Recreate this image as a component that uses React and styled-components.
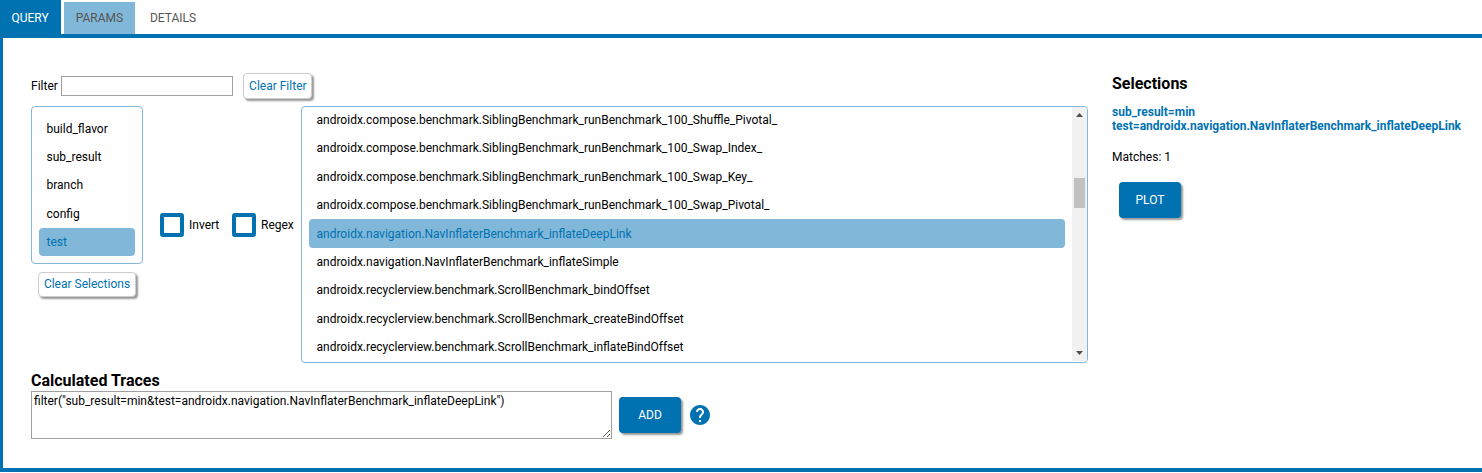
import React from 'react';
import styled, { createGlobalStyle } from 'styled-components';

const BLUE = '#0072b2';
const LIGHT_BLUE = '#81b8d9';

const GlobalStyle = createGlobalStyle`
  * { box-sizing: border-box; }
  body {
    margin: 0;
    background: #fff;
    color: #000;
    font: 12px/14px Roboto, sans-serif;
    overflow: hidden;
  }
  button, input, textarea { font: inherit; color: inherit; margin: 0; }
`;

const Tabs = styled.nav`
  display: flex;
  align-items: flex-end;
  height: 34px;
`;

const Tab = styled.button`
  height: ${(p) => (p.$selected ? 34 : 32)}px;
  width: ${(p) => p.$width}px;
  margin-right: 3px;
  padding: ${(p) => (p.$selected ? '2px 1px 0 0' : '0')};
  border: 0;
  background: ${(p) => p.$bg || 'transparent'};
  color: ${(p) => (p.$selected ? '#fff' : '#555')};
  text-align: center;
`;

const Panel = styled.main`
  display: flex;
  gap: 24px;
  height: 438px;
  padding: 35px 0 0 28px;
  border: solid ${BLUE};
  border-width: 4px 0 4px 3px;
`;

const Editor = styled.div`
  flex: none;
  width: 1057px;
`;

const FilterRow = styled.div`
  display: flex;
  align-items: center;
  height: 26px;
  margin-bottom: 7px;
`;

const FilterInput = styled.input`
  width: 172px;
  height: 20px;
  margin: 0 10px 0 3px;
  border: 1px solid #a0a0a0;
  background: #fff;
`;

const SmallButton = styled.button`
  height: ${(p) => p.$height}px;
  width: ${(p) => p.$width}px;
  padding: ${(p) => p.$padding};
  border: 1px solid #ccc;
  border-radius: 4px;
  background: #fff;
  color: ${BLUE};
  box-shadow: 2px 2px 2px #999;
  white-space: nowrap;
`;

const PickerRow = styled.div`
  display: flex;
  height: 257px;
`;

const KeyColumn = styled.div`
  width: 112px;
`;

const KeyList = styled.div`
  height: 158px;
  margin-bottom: 8px;
  padding: 7px;
  border: 1px solid ${LIGHT_BLUE};
  border-radius: 4px;
  background: #fefefe;
`;

const ClearSelections = styled.div`
  padding-left: 7px;
`;

const Item = styled.div`
  height: 28.42px;
  padding: 7.52px 7.5px 0;
  border-radius: 4px;
  background: ${(p) => (p.$selected ? LIGHT_BLUE : 'transparent')};
  color: ${(p) => (p.$selected ? BLUE : '#000')};
  white-space: nowrap;
`;

const Options = styled.div`
  display: flex;
  gap: 13px;
  height: 24px;
  width: 158px;
  margin-top: 107px;
  padding-left: 17px;
`;

const Option = styled.label`
  display: flex;
  flex: none;
  align-items: center;
  gap: 5px;
  width: 59px;
  white-space: nowrap;
`;

const Box = styled.span`
  width: 24px;
  height: 24px;
  flex: none;
  border: 4px solid ${BLUE};
  border-radius: 3px;
  background: #fff;
`;

const ValueList = styled.div`
  display: flex;
  width: 787px;
  border: 1px solid ${LIGHT_BLUE};
  border-radius: 4px;
  background: #fefefe;
  overflow: hidden;
`;

const Values = styled.div`
  flex: 1;
  height: 255px;
  padding: 0 7px;
  overflow: hidden;
`;

const ValuesInner = styled.div`
  margin-top: -1.52px;
`;

const ScrollBar = styled.div`
  display: flex;
  flex-direction: column;
  align-items: center;
  width: 15px;
  height: 254px;
  padding: 6px 0;
  background: #f1f1f1;
`;

const Thumb = styled.div`
  width: 11px;
  height: 30px;
  margin-top: 61px;
  margin-bottom: auto;
  background: #c1c1c1;
`;

const Arrow = styled.svg`
  display: block;
  width: 7px;
  height: 4px;
  fill: #505050;
`;

const Heading = styled.h3`
  margin: 0;
  font-size: 16px;
  line-height: 20px;
  font-weight: 700;
`;

const TracesHeading = styled(Heading)`
  margin-top: 8px;
`;

const TracesRow = styled.div`
  display: flex;
  align-items: center;
`;

const TracesText = styled.textarea`
  display: block;
  width: 581px;
  height: 48px;
  margin-right: 7px;
  padding: 2px;
  border: 1px solid #a0a0a0;
  border-radius: 0;
  background: #fff;
`;

const ActionButton = styled.button`
  width: 62px;
  height: 36px;
  padding: 0;
  border: 0;
  border-radius: 4px;
  background: ${BLUE};
  color: #fff;
  box-shadow: 2px 2px 2px #999;
`;

const HelpIcon = styled.svg`
  width: 24px;
  height: 24px;
  margin-left: 7px;
  fill: ${BLUE};
`;

const Summary = styled.aside`
  flex: 1;
  padding-top: 1px;
`;

const Chosen = styled.div`
  margin: 11px 0 17px;
  color: ${BLUE};
  font-weight: 700;
`;

const PlotRow = styled.div`
  padding: 18px 0 0 7px;
`;

const keys = ['build_flavor', 'sub_result', 'branch', 'config', 'test'];

const values = [
  'androidx.compose.benchmark.SiblingBenchmark_runBenchmark_100_Shuffle_Pivotal_',
  'androidx.compose.benchmark.SiblingBenchmark_runBenchmark_100_Swap_Index_',
  'androidx.compose.benchmark.SiblingBenchmark_runBenchmark_100_Swap_Key_',
  'androidx.compose.benchmark.SiblingBenchmark_runBenchmark_100_Swap_Pivotal_',
  'androidx.navigation.NavInflaterBenchmark_inflateDeepLink',
  'androidx.navigation.NavInflaterBenchmark_inflateSimple',
  'androidx.recyclerview.benchmark.ScrollBenchmark_bindOffset',
  'androidx.recyclerview.benchmark.ScrollBenchmark_createBindOffset',
  'androidx.recyclerview.benchmark.ScrollBenchmark_inflateBindOffset',
];

export default function App() {
  return (
    <>
      <GlobalStyle />
      <Tabs>
        <Tab $selected $bg={BLUE} $width={61}>QUERY</Tab>
        <Tab $bg={LIGHT_BLUE} $width={71}>PARAMS</Tab>
        <Tab $width={70}>DETAILS</Tab>
      </Tabs>
      <Panel>
        <Editor>
          <FilterRow>
            <span>Filter</span>
            <FilterInput aria-label="Filter" />
            <SmallButton $width={69} $height={26} $padding="0 0 0 1px">Clear Filter</SmallButton>
          </FilterRow>
          <PickerRow>
            <KeyColumn>
              <KeyList>
                {keys.map((k) => (
                  <Item key={k} $selected={k === 'test'}>{k}</Item>
                ))}
              </KeyList>
              <ClearSelections>
                <SmallButton $width={98} $height={25} $padding="0 0 1px">Clear Selections</SmallButton>
              </ClearSelections>
            </KeyColumn>
            <Options>
              <Option><Box />Invert</Option>
              <Option><Box />Regex</Option>
            </Options>
            <ValueList>
              <Values>
                <ValuesInner>
                  {values.map((v, i) => (
                    <Item key={v} $selected={i === 4}>{v}</Item>
                  ))}
                </ValuesInner>
              </Values>
              <ScrollBar>
                <Arrow viewBox="0 0 7 4"><path d="M3.5 0L7 4H0z" /></Arrow>
                <Thumb />
                <Arrow viewBox="0 0 7 4"><path d="M0 0H7L3.5 4z" /></Arrow>
              </ScrollBar>
            </ValueList>
          </PickerRow>
          <TracesHeading>Calculated Traces</TracesHeading>
          <TracesRow>
            <TracesText
              spellCheck={false}
              defaultValue={'filter("sub_result=min&test=androidx.navigation.NavInflaterBenchmark_inflateDeepLink")'}
            />
            <ActionButton>ADD</ActionButton>
            <HelpIcon viewBox="0 0 24 24">
              <path d="M12 2C6.48 2 2 6.48 2 12s4.48 10 10 10 10-4.48 10-10S17.52 2 12 2zm1 17h-2v-2h2v2zm2.07-7.75l-.9.92C13.45 12.9 13 13.5 13 15h-2v-.5c0-1.1.45-2.1 1.17-2.83l1.24-1.26c.37-.36.59-.86.59-1.41 0-1.1-.9-2-2-2s-2 .9-2 2H8c0-2.21 1.79-4 4-4s4 1.79 4 4c0 .88-.36 1.68-.93 2.25z" />
            </HelpIcon>
          </TracesRow>
        </Editor>
        <Summary>
          <Heading>Selections</Heading>
          <Chosen>
            <div>sub_result=min</div>
            <div>test=androidx.navigation.NavInflaterBenchmark_inflateDeepLink</div>
          </Chosen>
          <div>Matches: 1</div>
          <PlotRow>
            <ActionButton>PLOT</ActionButton>
          </PlotRow>
        </Summary>
      </Panel>
    </>
  );
}
